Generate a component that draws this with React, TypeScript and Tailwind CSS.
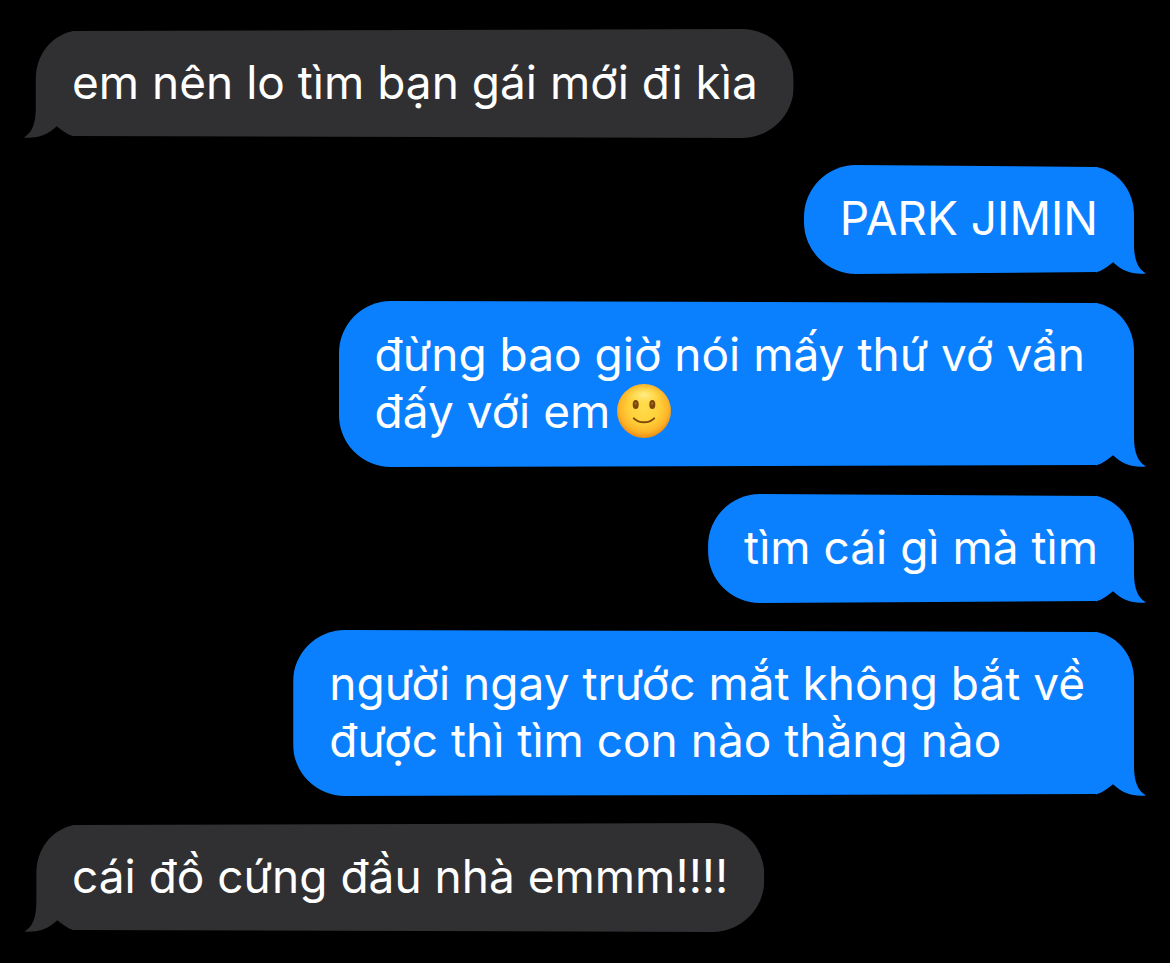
import { useId } from 'react';
import clsx from 'clsx';

type Message = {
  id: number;
  from: 'me' | 'them';
  text: string;
  smile?: boolean;
};

const messages: Message[] = [
  { id: 1, from: 'them', text: 'em nên lo tìm bạn gái mới đi kìa' },
  { id: 2, from: 'me', text: 'PARK JIMIN' },
  { id: 3, from: 'me', text: 'đừng bao giờ nói mấy thứ vớ vẩn \nđấy với em', smile: true },
  { id: 4, from: 'me', text: 'tìm cái gì mà tìm' },
  { id: 5, from: 'me', text: 'người ngay trước mắt không bắt về \nđược thì tìm con nào thằng nào' },
  { id: 6, from: 'them', text: 'cái đồ cứng đầu nhà emmm!!!!' },
];

function SmileEmoji() {
  const id = useId();
  return (
    <svg viewBox="0 0 56 56" role="img" aria-label="🙂" className="inline-block size-14 ml-1.5 -mt-4 -mb-2 align-middle">
      <defs>
        <radialGradient id={`${id}-face`} cx="0.5" cy="0.44" r="0.58">
          <stop offset="0" stopColor="#ffdc4c" />
          <stop offset="0.5" stopColor="#ffd03a" />
          <stop offset="0.78" stopColor="#fcb428" />
          <stop offset="1" stopColor="#e88410" />
        </radialGradient>
        <radialGradient id={`${id}-shine`}>
          <stop offset="0" stopColor="#fff29a" stopOpacity="0.85" />
          <stop offset="1" stopColor="#ffe45c" stopOpacity="0" />
        </radialGradient>
      </defs>
      <circle cx="28" cy="28" r="27" fill={`url(#${id}-face)`} />
      <ellipse cx="28" cy="12" rx="19" ry="10" fill={`url(#${id}-shine)`} />
      <ellipse cx="19.7" cy="21.5" rx="3" ry="4.5" fill="#7a4708" />
      <ellipse cx="36.3" cy="21.5" rx="3" ry="4.5" fill="#7a4708" />
      <ellipse cx="19.5" cy="20.5" rx="1" ry="1.6" fill="#a06c22" />
      <ellipse cx="36.1" cy="20.5" rx="1" ry="1.6" fill="#a06c22" />
      <path d="M17.8 35.4C23 40.6 33 40.6 38.2 35.4" fill="none" stroke="#7a4708" strokeWidth="2" strokeLinecap="round" />
    </svg>
  );
}

// Drawn for a sent message, mirrored for a received one
function BubbleShape({ mirrored }: { mirrored: boolean }) {
  return (
    <div
      aria-hidden="true"
      className={clsx('absolute inset-y-0 flex', mirrored ? '-left-3 right-0 -scale-x-100' : 'left-0 -right-3')}
    >
      <div className="-mr-px flex-1 rounded-l-[52px] bg-current [clip-path:polygon(0_0,52px_0,100%_2px,100%_calc(100%-2px),52px_100%,0_100%)]" />
      <div className="flex w-[50px] flex-col">
        <svg viewBox="0 0 50 50" className="h-[50px] w-full" fill="currentColor">
          <path d="M0 1.8C24 7 38 27 38 50H0Z" />
        </svg>
        <div className="w-[38px] flex-1 bg-current" />
        <svg viewBox="0 0 50 50" className="h-[50px] w-full" fill="currentColor">
          <path d="M0 0H38V20C38 36 42 45 50 49.4C37 50.6 27 47.5 17 38.2C11 43 7 46.3 0 48.4Z" />
        </svg>
      </div>
    </div>
  );
}

function Bubble({ message }: { message: Message }) {
  const mine = message.from === 'me';
  return (
    <li className={clsx('relative', mine ? 'self-end text-[#0b80ff]' : 'self-start text-[#303032]')}>
      <BubbleShape mirrored={!mine} />
      <p className="relative px-9 pt-[25px] pb-[27px] text-[46px] leading-[57px] whitespace-break-spaces text-white">
        {message.text}
        {message.smile && <SmileEmoji />}
      </p>
    </li>
  );
}

export default function App() {
  return (
    <main className="min-h-screen bg-black font-['Inter','Noto_Sans',sans-serif]">
      <ul className="flex flex-col gap-[27px] px-9 pt-[29px] pb-[31px]">
        {messages.map((message) => (
          <Bubble key={message.id} message={message} />
        ))}
      </ul>
    </main>
  );
}
